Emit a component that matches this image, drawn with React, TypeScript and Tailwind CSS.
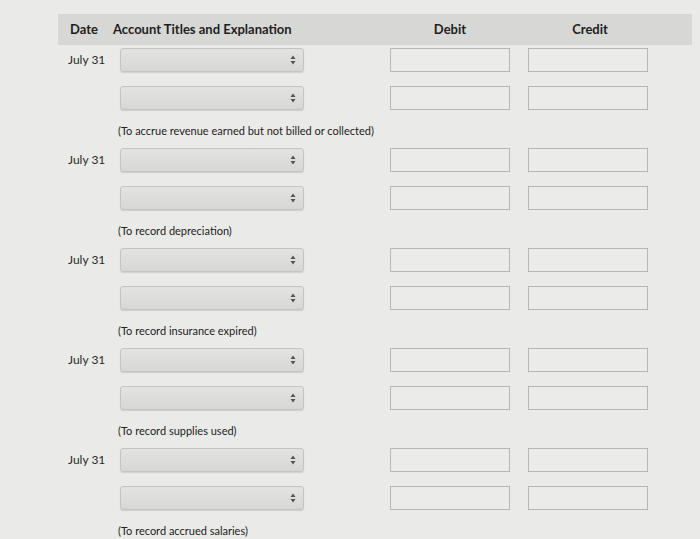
import React from "react";

const notes = [
  "(To accrue revenue earned but not billed or collected)",
  "(To record depreciation)",
  "(To record insurance expired)",
  "(To record supplies used)",
  "(To record accrued salaries)",
];

function Arrows() {
  return (
    <svg width="6" height="10" viewBox="0 0 6 10" className="shrink-0">
      <path d="M3 0.5 L5.5 4 L0.5 4 Z" fill="#555" />
      <path d="M3 9.5 L5.5 6 L0.5 6 Z" fill="#555" />
    </svg>
  );
}

function Select() {
  return (
    <div className="ml-[7px] flex h-[24px] w-[184px] items-center justify-end rounded-[3px] border border-[#c4c4c2] bg-gradient-to-b from-[#e3e3e1] to-[#d7d7d5] pr-[7px] shadow-[0_1px_1px_rgba(0,0,0,0.12)]">
      <Arrows />
    </div>
  );
}

function Input() {
  return <div className="h-[24px] w-[120px] border border-[#b7b7b5] bg-[#ebebe9]" />;
}

function Row({ date }: { date?: string }) {
  return (
    <div className="flex h-[24px] items-center">
      <div className="w-[55px] pl-[10px] text-[12px] text-[#2a2a2a]">{date}</div>
      <div className="w-[277px]">
        <Select />
      </div>
      <Input />
      <div className="ml-[18px]">
        <Input />
      </div>
    </div>
  );
}

export default function App() {
  return (
    <div
      className="min-h-[539px] w-[700px] bg-[#eaeae8] pl-[58px] pt-[14px] text-[#222]"
      style={{ fontFamily: "Lato, 'Open Sans', sans-serif" }}
    >
      <div className="flex h-[31px] w-[634px] items-center bg-[#d7d7d5] text-[13px] font-bold text-[#1e1e1e]">
        <div className="w-[55px] pl-[12px]">Date</div>
        <div className="w-[277px]">Account Titles and Explanation</div>
        <div className="w-[120px] text-center">Debit</div>
        <div className="ml-[18px] w-[124px] text-center">Credit</div>
      </div>
      <div className="pt-[3px]">
        {notes.map((n, i) => (
          <div key={i} className="flex flex-col">
            <Row date="July 31" />
            <div className="mt-[14px]">
              <Row />
            </div>
            <div className="mb-[9px] mt-[13px] flex h-[16px] items-center pl-[60px] text-[11px] text-[#222]">
              {n}
            </div>
          </div>
        ))}
      </div>
    </div>
  );
}
